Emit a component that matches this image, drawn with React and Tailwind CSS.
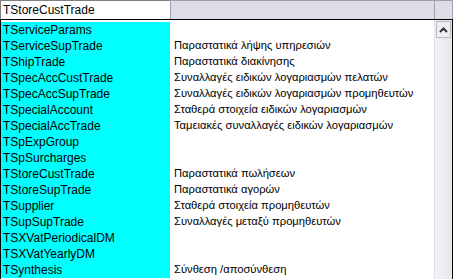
import { useState } from 'react';

const rows = [
  ['TServiceParams', ''],
  ['TServiceSupTrade', 'Παραστατικά λήψης υπηρεσιών'],
  ['TShipTrade', 'Παραστατικά διακίνησης'],
  ['TSpecAccCustTrade', 'Συναλλαγές ειδικών λογαριασμών πελατών'],
  ['TSpecAccSupTrade', 'Συναλλαγές ειδικών λογαριασμών προμηθευτών'],
  ['TSpecialAccount', 'Σταθερά στοιχεία ειδικών λογαριασμών'],
  ['TSpecialAccTrade', 'Ταμειακές συναλλαγές ειδικών λογαριασμών'],
  ['TSpExpGroup', ''],
  ['TSpSurcharges', ''],
  ['TStoreCustTrade', 'Παραστατικά πωλήσεων'],
  ['TStoreSupTrade', 'Παραστατικά αγορών'],
  ['TSupplier', 'Σταθερά στοιχεία προμηθευτών'],
  ['TSupSupTrade', 'Συναλλαγές μεταξύ προμηθευτών'],
  ['TSXVatPeriodicalDM', ''],
  ['TSXVatYearlyDM', ''],
  ['TSynthesis', 'Σύνθεση /αποσύνθεση'],
];

export default function App() {
  const [value] = useState('TStoreCustTrade');

  return (
    <div className="w-[453px] h-[279px] overflow-hidden bg-white text-black text-[11px] leading-none"
      style={{ fontFamily: '"Liberation Sans", Arial, sans-serif' }}>
      {/* Combo header */}
      <div className="flex h-[20px] border-b border-black">
        <div className="w-[170px] h-full bg-white border-l border-t border-[#7f7f7f] flex items-center pl-[2px] text-[12px]">
          {value}
        </div>
        <div className="flex-1 h-full bg-[#dcdde6] border-t border-l border-[#a0a0a8]" />
        <div className="w-[19px] h-full bg-[#dcdde6] border-t border-l border-r border-[#a0a0a8]" />
      </div>

      {/* Drop-down list */}
      <div className="flex h-[259px] border-l border-black border-r">
        <div className="flex-1 flex flex-col pt-[2px]">
          {rows.map(([name, desc]) => (
            <div key={name} className="flex h-[16px] items-center">
              <div className="w-[169px] h-full bg-[#00ffff] flex items-center pl-[2px] text-[12px]">{name}</div>
              <div className="flex-1 h-full flex items-center pl-[4px] text-[11.2px] whitespace-nowrap">{desc}</div>
            </div>
          ))}
        </div>
        {/* Scrollbar */}
        <div className="w-[18px] h-full flex flex-col bg-gradient-to-r from-[#f2f2f6] to-[#e6e6ee] border-l border-[#e0e0e8]">
          <div className="h-[17px] mx-[1px] mt-[1px] border border-[#b8b8c4] bg-[#eeeef2] flex items-center justify-center">
            <svg width="9" height="6" viewBox="0 0 9 6">
              <path d="M1 5 L4.5 1.5 L8 5" fill="none" stroke="#303030" strokeWidth="2" />
            </svg>
          </div>
          <div className="flex-1" />
        </div>
      </div>
    </div>
  );
}
